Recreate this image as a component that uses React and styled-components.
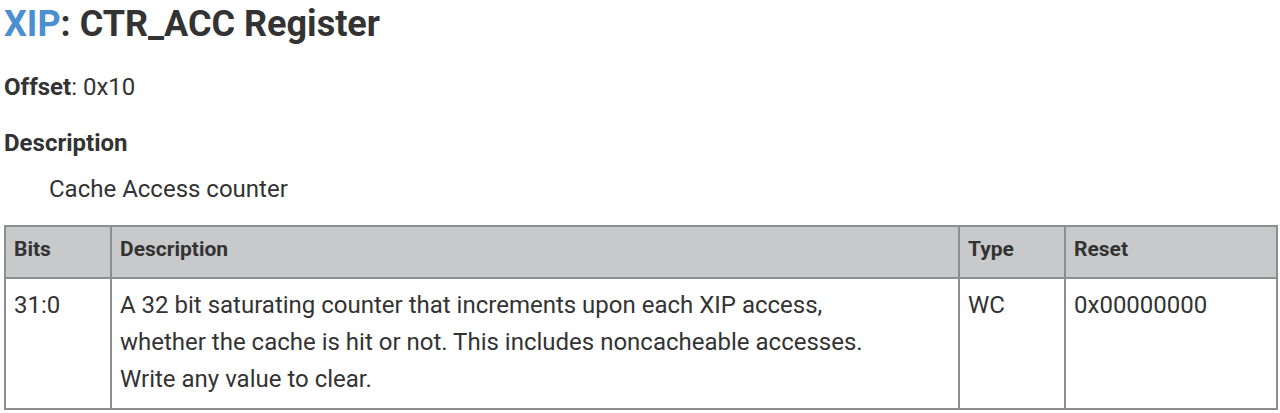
import React from "react";
import styled, { createGlobalStyle } from "styled-components";

const GlobalStyle = createGlobalStyle`
  html, body {
    margin: 0;
    padding: 0;
    background: #ffffff;
  }
  body {
    font-family: Roboto, "Liberation Sans", sans-serif;
    font-size: 24px;
    color: #333333;
  }
`;

const Page = styled.div`
  padding: 0 4px;
`;

const Title = styled.h1`
  margin: 0;
  padding-top: 2px;
  font-size: 36px;
  line-height: 44px;
  font-weight: 700;
  color: #333333;
`;

const Link = styled.span`
  color: #4a8fd0;
`;

const Field = styled.p`
  margin: 23px 0 0;
  line-height: 36px;
`;

const Heading = styled.h4`
  margin: 20px 0 0;
  font-size: 24px;
  line-height: 36px;
  font-weight: 700;
`;

const Indented = styled.p`
  margin: 10px 0 0;
  padding-left: 45px;
  line-height: 36px;
`;

const Table = styled.table`
  margin-top: 18px;
  width: 1272px;
  border-collapse: collapse;
  table-layout: fixed;
  border: 2px solid #8e8e8e;
`;

const Head = styled.th`
  box-sizing: border-box;
  width: ${props => props.w}px;
  background: #c8c9cb;
  border: 2px solid #8e8e8e;
  padding: 4px 8px 10px;
  font-size: 21px;
  line-height: 36px;
  font-weight: 700;
  text-align: left;
`;

const Cell = styled.td`
  border: 2px solid #8e8e8e;
  padding: 8px 8px 10px;
  line-height: 37px;
  vertical-align: top;
`;

const columns = [
  { name: "Bits", w: 106 },
  { name: "Description", w: 848 },
  { name: "Type", w: 106 },
  { name: "Reset", w: 212 },
];

export default function App() {
  return (
    <Page>
      <GlobalStyle />
      <Title>
        <Link>XIP</Link>: CTR_ACC Register
      </Title>
      <Field>
        <strong>Offset</strong>: 0x10
      </Field>
      <Heading>Description</Heading>
      <Indented>Cache Access counter</Indented>
      <Table>
        <thead>
          <tr>
            {columns.map(col => (
              <Head key={col.name} w={col.w}>
                {col.name}
              </Head>
            ))}
          </tr>
        </thead>
        <tbody>
          <tr>
            <Cell>31:0</Cell>
            <Cell>
              A 32 bit saturating counter that increments upon each XIP access,
              <br />
              whether the cache is hit or not. This includes noncacheable
              accesses.
              <br />
              Write any value to clear.
            </Cell>
            <Cell>WC</Cell>
            <Cell>0x00000000</Cell>
          </tr>
        </tbody>
      </Table>
    </Page>
  );
}
